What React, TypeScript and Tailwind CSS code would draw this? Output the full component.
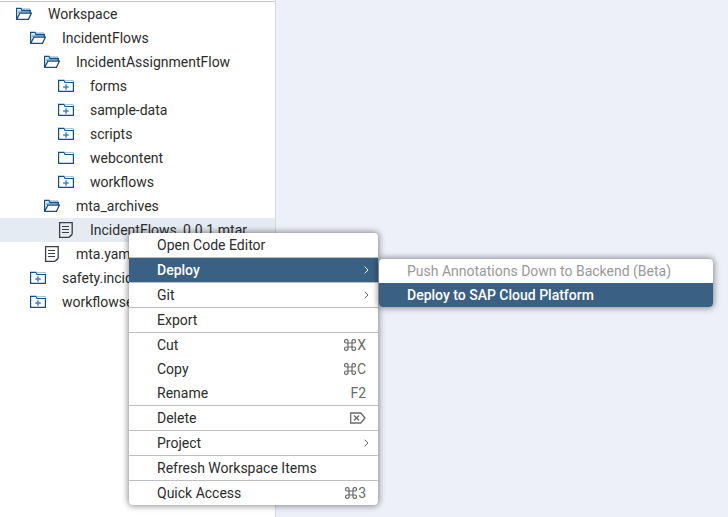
import React from "react";

type IconKind = "open" | "plus" | "closed" | "file";

type TreeItem = { label: string; icon: IconKind; level: number; selected?: boolean };

const tree: TreeItem[] = [
  { label: "Workspace", icon: "open", level: 0 },
  { label: "IncidentFlows", icon: "open", level: 1 },
  { label: "IncidentAssignmentFlow", icon: "open", level: 2 },
  { label: "forms", icon: "plus", level: 3 },
  { label: "sample-data", icon: "plus", level: 3 },
  { label: "scripts", icon: "plus", level: 3 },
  { label: "webcontent", icon: "closed", level: 3 },
  { label: "workflows", icon: "plus", level: 3 },
  { label: "mta_archives", icon: "open", level: 2 },
  { label: "IncidentFlows_0.0.1.mtar", icon: "file", level: 3, selected: true },
  { label: "mta.yaml", icon: "file", level: 2 },
  { label: "safety.incid", icon: "plus", level: 1 },
  { label: "workflowse", icon: "plus", level: 1 },
];

const indents = ["pl-4", "pl-[30px]", "pl-11", "pl-[58px]"];

function TreeIcon({ kind }: { kind: IconKind }) {
  if (kind === "file") {
    return (
      <svg width="16" height="16" viewBox="0 0 16 16" fill="none" stroke="#3c4045" aria-hidden="true">
        <path d="M11 15.3H1.6V0.7H14.2V12.2" strokeWidth="1.3" />
        <path d="M11 15.3L14.2 12.4" strokeWidth="1.5" />
        <path d="M4 4.5H11M4 7.5H11M4 10.5H11" strokeWidth="1.2" />
      </svg>
    );
  }
  if (kind === "open") {
    return (
      <svg width="16" height="16" viewBox="0 0 16 16" fill="none" aria-hidden="true">
        <path d="M2 4.5H14V7H2Z" fill="#9bb8cf" />
        <path d="M0.6 13.3V2.4H5L6 4.5H14.3V7" stroke="#0f5088" strokeWidth="1.3" />
        <path d="M6 3H14" stroke="#86a9c5" />
        <path d="M3.8 7.2H15.3L12.5 13.3H0.8Z" fill="#fff" stroke="#0f5088" strokeWidth="1.3" />
      </svg>
    );
  }
  return (
    <svg width="16" height="16" viewBox="0 0 16 16" fill="none" aria-hidden="true">
      <path d="M0 2.3H6L7 4.5H16" stroke="#0f5088" strokeWidth="1.2" />
      <path d="M6.5 2.5H15.5V4" stroke="#a9c2d6" />
      <path d="M0.6 2.5V13.4H15.4V4.5" stroke="#0f5088" strokeWidth="1.2" />
      {kind === "plus" && <path d="M8 6.3V11.7M5.2 9H10.8" stroke="#4b80aa" strokeWidth="1.5" />}
    </svg>
  );
}

function Chevron() {
  return (
    <svg width="5" height="8" viewBox="0 0 5 8" fill="none" stroke="currentColor" aria-hidden="true">
      <path d="M0.7 0.7L4 4L0.7 7.3" />
    </svg>
  );
}

function Command() {
  return (
    <svg width="12" height="12" viewBox="0 0 12 12" fill="none" stroke="currentColor" strokeWidth="1.2" aria-label="Command">
      <path d="M4 4H8V8H4ZM4 4H2.5A1.75 1.75 0 1 1 4 2.3ZM8 4V2.3A1.75 1.75 0 1 1 9.5 4ZM8 8H9.5A1.75 1.75 0 1 1 8 9.7ZM4 8V9.7A1.75 1.75 0 1 1 2.5 8Z" />
    </svg>
  );
}

function DeleteKey() {
  return (
    <svg width="16" height="12" viewBox="0 0 16 12" fill="none" stroke="currentColor" aria-label="Delete key">
      <path d="M0.7 1H10.8L15 6L10.8 11H0.7Z" strokeWidth="1.3" />
      <path d="M4 3.5L9 8.5M9 3.5L4 8.5" strokeWidth="1.4" />
    </svg>
  );
}

type MenuEntry = {
  label: string;
  command?: boolean;
  shortcut?: string;
  deleteKey?: boolean;
  submenu?: boolean;
  active?: boolean;
  separated?: boolean;
};

const menu: MenuEntry[] = [
  { label: "Open Code Editor" },
  { label: "Deploy", submenu: true, active: true, separated: true },
  { label: "Git", submenu: true, separated: true },
  { label: "Export", separated: true },
  { label: "Cut", command: true, shortcut: "X", separated: true },
  { label: "Copy", command: true, shortcut: "C" },
  { label: "Rename", shortcut: "F2" },
  { label: "Delete", deleteKey: true, separated: true },
  { label: "Project", submenu: true, separated: true },
  { label: "Refresh Workspace Items", separated: true },
  { label: "Quick Access", command: true, shortcut: "3", separated: true },
];

function MenuRow({ item }: { item: MenuEntry }) {
  return (
    <li role="none" className={item.separated ? "border-t border-[#bfbfbf]" : ""}>
      <button
        type="button"
        role="menuitem"
        className={`flex h-6 w-full items-center justify-between pl-7 ${item.submenu ? "pr-[9px]" : "pr-3"} ${
          item.active ? "bg-[#3a6083] font-medium text-white" : "text-[#2c2c2c]"
        }`}
      >
        <span>{item.label}</span>
        <span className={`flex items-center gap-px ${item.active ? "" : "text-[#6a6a6a]"}`}>
          {item.command && <Command />}
          {item.shortcut && <kbd className="font-[Roboto,sans-serif]">{item.shortcut}</kbd>}
          {item.deleteKey && <DeleteKey />}
          {item.submenu && <Chevron />}
        </span>
      </button>
    </li>
  );
}

export default function App() {
  return (
    <div className="relative flex min-h-screen bg-[#edf0f9] font-[Roboto,sans-serif] text-sm text-[#2c2c2c]">
      <nav aria-label="Workspace files" className="w-[276px] shrink-0 border-r border-[#d3d7dc] bg-white pt-px">
        <ul role="tree" className="border-t border-[#c5c9c4]">
          {tree.map((item) => (
            <li
              key={item.label}
              role="treeitem"
              aria-selected={!!item.selected}
              className={`flex h-6 items-center gap-4 whitespace-nowrap ${indents[item.level]} ${
                item.selected ? "bg-[#e5ebf3]" : ""
              }`}
            >
              <TreeIcon kind={item.icon} />
              <span>{item.label}</span>
            </li>
          ))}
        </ul>
      </nav>
      <main className="flex-1" />

      <ul
        role="menu"
        aria-label="File actions"
        className="absolute top-[233px] left-[129px] w-[249px] overflow-hidden rounded bg-white shadow-[0_0_6px_1px_rgba(0,0,0,0.45)]"
      >
        {menu.map((item) => (
          <MenuRow key={item.label} item={item} />
        ))}
      </ul>

      <ul
        role="menu"
        aria-label="Deploy"
        className="absolute top-[259px] left-[379px] w-[334px] overflow-hidden rounded bg-white shadow-[0_0_6px_1px_rgba(0,0,0,0.45)]"
      >
        <li role="none">
          <button type="button" role="menuitem" disabled className="flex h-6 w-full items-center px-7 text-[#999999]">
            Push Annotations Down to Backend (Beta)
          </button>
        </li>
        <li role="none">
          <button type="button" role="menuitem" className="flex h-6 w-full items-center bg-[#3a6083] px-7 font-medium text-white">
            Deploy to SAP Cloud Platform
          </button>
        </li>
      </ul>
    </div>
  );
}
